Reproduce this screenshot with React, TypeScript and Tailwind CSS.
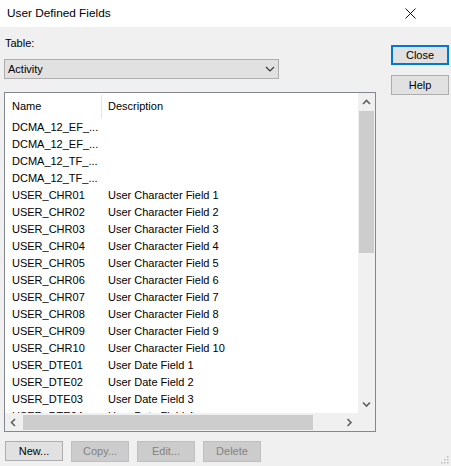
import React from 'react';

const rows: [string, string][] = [
    ['DCMA_12_EF_...', ''],
    ['DCMA_12_EF_...', ''],
    ['DCMA_12_TF_...', ''],
    ['DCMA_12_TF_...', ''],
    ['USER_CHR01', 'User Character Field 1'],
    ['USER_CHR02', 'User Character Field 2'],
    ['USER_CHR03', 'User Character Field 3'],
    ['USER_CHR04', 'User Character Field 4'],
    ['USER_CHR05', 'User Character Field 5'],
    ['USER_CHR06', 'User Character Field 6'],
    ['USER_CHR07', 'User Character Field 7'],
    ['USER_CHR08', 'User Character Field 8'],
    ['USER_CHR09', 'User Character Field 9'],
    ['USER_CHR10', 'User Character Field 10'],
    ['USER_DTE01', 'User Date Field 1'],
    ['USER_DTE02', 'User Date Field 2'],
    ['USER_DTE03', 'User Date Field 3'],
    ['USER_DTE04', 'User Date Field 4'],
];

const Arrow = ({ dir }: { dir: 'up' | 'down' | 'left' | 'right' }) => {
    const pts = {
        up: '1,5 4.5,1.5 8,5',
        down: '1,1.5 4.5,5 8,1.5',
        left: '5,1 1.5,4.5 5,8',
        right: '1.5,1 5,4.5 1.5,8',
    }[dir];
    const horiz = dir === 'left' || dir === 'right';
    return (
        <svg width={horiz ? 7 : 9} height={horiz ? 9 : 7} viewBox={horiz ? '0 0 7 9' : '0 0 9 7'}>
            <polyline points={pts} fill="none" stroke="#606060" strokeWidth="1.6" />
        </svg>
    );
};

const Btn = ({ label, disabled, focused }: { label: string; disabled?: boolean; focused?: boolean }) => (
    <button
        type="button"
        className={
            disabled
                ? 'w-[58px] h-[21px] border border-[#bfbfbf] bg-[#cccccc] text-[#838383] leading-none'
                : focused
                  ? 'w-[58px] h-[20px] border-2 border-[#0078d7] bg-[#e1e1e1] text-black leading-none'
                  : 'w-[58px] h-[20px] border border-[#adadad] bg-[#e1e1e1] text-black leading-none'
        }
    >
        {label}
    </button>
);

export default function App() {
    return (
        <div
            className="relative w-[451px] h-[466px] bg-[#f0f0f0] text-[11px] text-black overflow-hidden flex flex-col"
            style={{ fontFamily: '"Liberation Sans", Arial, sans-serif' }}
        >
            {/* title bar */}
            <div className="h-[27px] bg-white flex items-center justify-between pl-[7px] pr-[35px] shrink-0">
                <span className="text-[11.8px] pt-[1px]">User Defined Fields</span>
                <svg width="11" height="11" viewBox="0 0 11 11">
                    <path d="M0.5 0.5 L10.5 10.5 M10.5 0.5 L0.5 10.5" stroke="#111" strokeWidth="1" />
                </svg>
            </div>

            <div className="flex pl-[4px] gap-[15px]">
                {/* left column */}
                <div className="w-[372px] flex flex-col">
                    <div className="mt-[10px] h-[13px] leading-[13px] pl-[1px]">Table:</div>
                    <div className="mt-[9px] w-[275px] h-[20px] border border-[#adadad] bg-[#e1e1e1] flex items-center justify-between pl-[3px] pr-[3px]">
                        <span>Activity</span>
                        <svg width="10" height="6" viewBox="0 0 10 6">
                            <polyline points="1,1 5,5 9,1" fill="none" stroke="#333" strokeWidth="1.1" />
                        </svg>
                    </div>

                    {/* list */}
                    <div className="mt-[13px] h-[340px] border border-[#828790] bg-white grid grid-cols-[1fr_17px] grid-rows-[1fr_18px]">
                        <div className="overflow-hidden">
                            <div className="flex h-[26px] items-center relative">
                                <div className="w-[96px] pl-[7px] pt-[1px]">Name</div>
                                <div className="w-px h-[23px] bg-[#e5e5e5]" />
                                <div className="pl-[6px] pt-[1px]">Description</div>
                            </div>
                            {rows.map(([n, d], i) => (
                                <div key={i} className="flex h-[17px] items-center">
                                    <div className="w-[96px] pl-[7px] whitespace-nowrap">{n}</div>
                                    <div className="pl-[7px] whitespace-nowrap">{d}</div>
                                </div>
                            ))}
                        </div>

                        {/* vertical scrollbar */}
                        <div className="bg-[#f0f0f0] flex flex-col items-center">
                            <div className="h-[17px] w-full flex items-center justify-center pt-[2px]">
                                <Arrow dir="up" />
                            </div>
                            <div className="w-[15px] h-[142px] bg-[#cdcdcd] mt-[1px]" />
                            <div className="flex-1" />
                            <div className="h-[17px] w-full flex items-center justify-center">
                                <Arrow dir="down" />
                            </div>
                        </div>

                        {/* horizontal scrollbar */}
                        <div className="bg-[#f0f0f0] flex items-center">
                            <div className="w-[17px] h-full flex items-center justify-center">
                                <Arrow dir="left" />
                            </div>
                            <div className="w-[290px] h-[15px] bg-[#cdcdcd] ml-[1px]" />
                            <div className="flex-1" />
                            <div className="w-[17px] h-full flex items-center justify-center">
                                <Arrow dir="right" />
                            </div>
                        </div>
                        <div className="bg-[#f0f0f0]" />
                    </div>

                    <div className="mt-[9px] flex gap-[8px] pl-[1px]">
                        <Btn label="New..." />
                        <Btn label="Copy..." disabled />
                        <Btn label="Edit..." disabled />
                        <Btn label="Delete" disabled />
                    </div>
                </div>

                {/* right column */}
                <div className="flex flex-col gap-[10px] pt-[18px]">
                    <Btn label="Close" focused />
                    <Btn label="Help" />
                </div>
            </div>

            {/* size grip */}
            <svg className="absolute right-[2px] bottom-[2px]" width="10" height="10" viewBox="0 0 10 10">
                {[
                    [8, 2],
                    [5, 5],
                    [8, 5],
                    [2, 8],
                    [5, 8],
                    [8, 8],
                ].map(([x, y], i) => (
                    <rect key={i} x={x} y={y} width="1.5" height="1.5" fill="#bcbcbc" />
                ))}
            </svg>
        </div>
    );
}
